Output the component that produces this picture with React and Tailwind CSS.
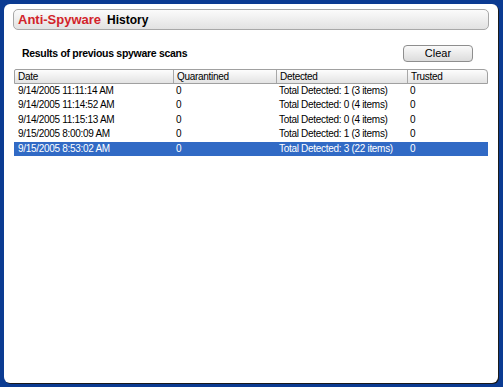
const rows = [
  { date: '9/14/2005 11:11:14 AM', quarantined: '0', detected: 'Total Detected: 1 (3 items)', trusted: '0' },
  { date: '9/14/2005 11:14:52 AM', quarantined: '0', detected: 'Total Detected: 0 (4 items)', trusted: '0' },
  { date: '9/14/2005 11:15:13 AM', quarantined: '0', detected: 'Total Detected: 0 (4 items)', trusted: '0' },
  { date: '9/15/2005 8:00:09 AM', quarantined: '0', detected: 'Total Detected: 1 (3 items)', trusted: '0' },
  { date: '9/15/2005 8:53:02 AM', quarantined: '0', detected: 'Total Detected: 3 (22 items)', trusted: '0', selected: true },
];

export default function App() {
  return (
    <div className="w-[503px] h-[387px] bg-[#0b3b92] p-[4px] pr-[5px] pb-[4px] font-['Liberation_Sans',Arial,sans-serif]">
      <div className="h-full bg-white rounded-[6px] shadow-[1px_1px_0_#1a1a1a] pt-[5px] px-[9px]">
        {/* header bar */}
        <div className="h-[21px] rounded-[5px] border border-[#a8a8a8] bg-gradient-to-b from-[#fbfbfb] to-[#e2e2e2] flex items-center pl-[4px] gap-[6px] font-bold">
          <span className="text-[#d2232a] text-[13px]">Anti-Spyware</span>
          <span className="text-black text-[12px]">History</span>
        </div>

        <div className="flex items-center justify-between mt-[15px] pl-[9px] pr-[16px]">
          <div className="text-[10.5px] tracking-[-0.3px] font-bold text-black">Results of previous spyware scans</div>
          <button className="w-[70px] h-[17px] rounded-[4px] border border-[#8e8e8e] bg-gradient-to-b from-[#fafafa] to-[#dcdcdc] text-[11px] text-black leading-none">
            Clear
          </button>
        </div>

        {/* table */}
        <div className="mt-[7px] ml-[1px] mr-[1px] text-[10px] tracking-[-0.3px] text-black whitespace-nowrap">
          <div className="flex h-[15px] border border-[#a0a0a0] rounded-tr-[4px] rounded-tl-[2px] bg-gradient-to-b from-[#fdfdfd] to-[#e3e3e3]">
            <div className="w-[159px] pl-[3px] border-r border-[#a8a8a8] leading-[13px]">Date</div>
            <div className="w-[103px] pl-[3px] border-r border-[#a8a8a8] leading-[13px]">Quarantined</div>
            <div className="w-[131px] pl-[3px] border-r border-[#a8a8a8] leading-[13px]">Detected</div>
            <div className="flex-1 pl-[3px] leading-[13px]">Trusted</div>
          </div>
          {rows.map((r) => (
            <div
              key={r.date}
              className={`flex h-[14.4px] leading-[14.4px] ${r.selected ? 'bg-[#316ac5] text-white' : ''}`}
            >
              <div className="w-[159px] pl-[4px]">{r.date}</div>
              <div className="w-[103px] pl-[3px]">{r.quarantined}</div>
              <div className="w-[131px] pl-[3px]">{r.detected}</div>
              <div className="flex-1 pl-[3px]">{r.trusted}</div>
            </div>
          ))}
        </div>
      </div>
    </div>
  );
}
